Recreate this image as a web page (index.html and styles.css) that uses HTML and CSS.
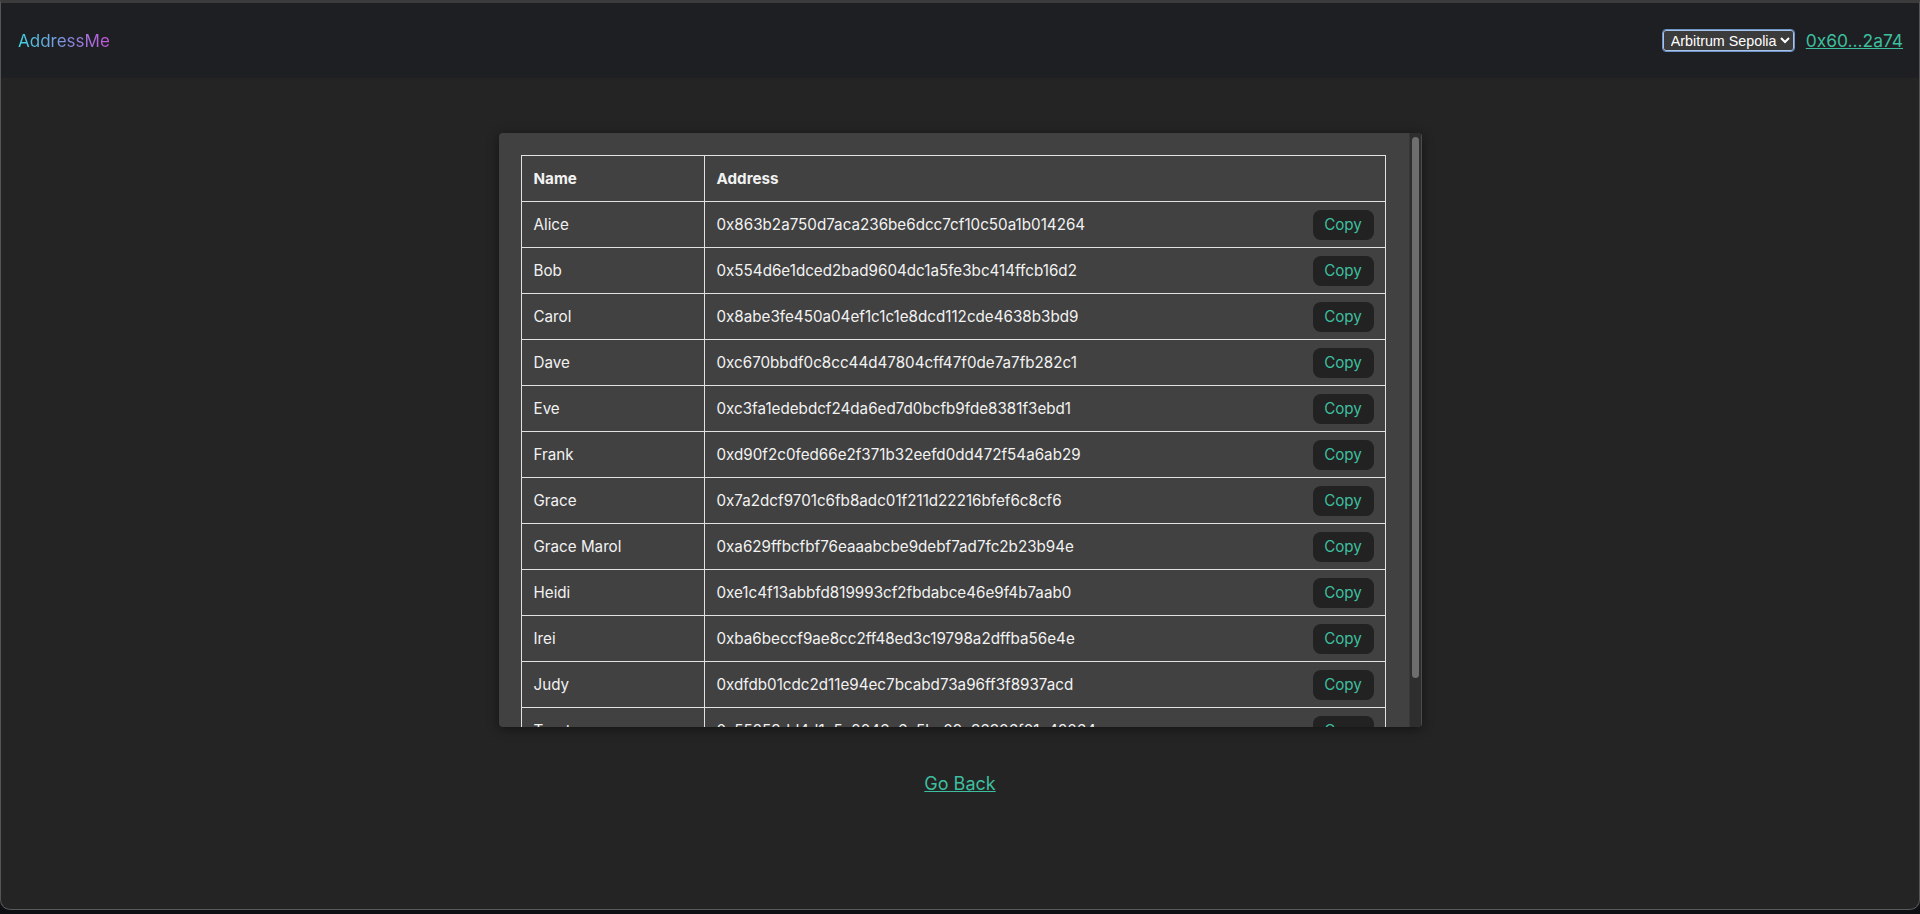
FILE: index.html
```html
<!DOCTYPE html>
<html lang="en">
<head>
<meta charset="utf-8">
<title>AddressMe</title>
<link rel="stylesheet" href="styles.css">
</head>
<body>
<div class="window">
  <header class="header">
    <div class="logo">AddressMe</div>
    <div class="header-right">
      <select class="network">
        <option>Arbitrum Sepolia</option>
        <option>Arbitrum One</option>
        <option>Ethereum</option>
      </select>
      <a class="account" href="#">0x60...2a74</a>
    </div>
  </header>
  <main class="main">
    <div class="card">
      <div class="scroller">
        <table class="book">
          <thead>
            <tr><th class="col-name">Name</th><th>Address</th></tr>
          </thead>
          <tbody>
            <tr><td>Alice</td><td><div class="addr"><span>0x863b2a750d7aca236be6dcc7cf10c50a1b014264</span><button class="copy">Copy</button></div></td></tr>
            <tr><td>Bob</td><td><div class="addr"><span>0x554d6e1dced2bad9604dc1a5fe3bc414ffcb16d2</span><button class="copy">Copy</button></div></td></tr>
            <tr><td>Carol</td><td><div class="addr"><span>0x8abe3fe450a04ef1c1c1e8dcd112cde4638b3bd9</span><button class="copy">Copy</button></div></td></tr>
            <tr><td>Dave</td><td><div class="addr"><span>0xc670bbdf0c8cc44d47804cff47f0de7a7fb282c1</span><button class="copy">Copy</button></div></td></tr>
            <tr><td>Eve</td><td><div class="addr"><span>0xc3fa1edebdcf24da6ed7d0bcfb9fde8381f3ebd1</span><button class="copy">Copy</button></div></td></tr>
            <tr><td>Frank</td><td><div class="addr"><span>0xd90f2c0fed66e2f371b32eefd0dd472f54a6ab29</span><button class="copy">Copy</button></div></td></tr>
            <tr><td>Grace</td><td><div class="addr"><span>0x7a2dcf9701c6fb8adc01f211d22216bfef6c8cf6</span><button class="copy">Copy</button></div></td></tr>
            <tr><td>Grace Marol</td><td><div class="addr"><span>0xa629ffbcfbf76eaaabcbe9debf7ad7fc2b23b94e</span><button class="copy">Copy</button></div></td></tr>
            <tr><td>Heidi</td><td><div class="addr"><span>0xe1c4f13abbfd819993cf2fbdabce46e9f4b7aab0</span><button class="copy">Copy</button></div></td></tr>
            <tr><td>Irei</td><td><div class="addr"><span>0xba6beccf9ae8cc2ff48ed3c19798a2dffba56e4e</span><button class="copy">Copy</button></div></td></tr>
            <tr><td>Judy</td><td><div class="addr"><span>0xdfdb01cdc2d11e94ec7bcabd73a96ff3f8937acd</span><button class="copy">Copy</button></div></td></tr>
            <tr><td>Trent</td><td><div class="addr"><span>0x55253dd4d1e5c2046c6a5bc09c36306f01c42064</span><button class="copy">Copy</button></div></td></tr>
          </tbody>
        </table>
      </div>
      <div class="scrollbar"><div class="thumb"></div></div>
    </div>
    <a class="back" href="#">Go Back</a>
  </main>
</div>
</body>
</html>
```
FILE: styles.css
```css
html, body {
  margin: 0;
  padding: 0;
  background: #0d0f12;
  font-family: Inter, "Noto Sans", "Liberation Sans", sans-serif;
}

.window {
  box-sizing: border-box;
  height: 910px;
  display: flex;
  flex-direction: column;
  background: #242424;
  border-top: 3px solid #3b3b3b;
  border-left: 1px solid #555555;
  border-right: 1px solid #555555;
  border-bottom: 1px solid #5a5a5a;
  border-radius: 0 0 10px 10px;
  overflow: hidden;
}

.header {
  height: 75px;
  flex: none;
  background: #1e1f22;
  display: flex;
  align-items: center;
  justify-content: space-between;
  padding: 0 16px 0 17px;
}

.logo {
  font-size: 17px;
  background: linear-gradient(90deg, #40d4e0 0%, #7f92e2 50%, #c652d8 100%);
  -webkit-background-clip: text;
  background-clip: text;
  color: transparent;
}

.header-right {
  display: flex;
  align-items: center;
  gap: 12px;
}

.network {
  color-scheme: dark;
  font-family: "Liberation Sans", Arial, sans-serif;
  font-size: 14.3px;
  color: #ffffff;
  background: #3b3b3b;
  border: 1px solid #a9c4e8;
  border-radius: 3px;
  height: 21px;
  padding: 0 0 0 3px;
  outline: 1px solid #6f94c8;
}

.account {
  font-size: 17.4px;
  color: #3dbf9f;
  text-decoration: underline;
}

.main {
  display: flex;
  flex-direction: column;
  align-items: center;
  padding-top: 55px;
}

.card {
  width: 923px;
  height: 594px;
  display: flex;
  background: #414141;
  border-radius: 4px;
  box-shadow: 0 2px 12px rgba(0, 0, 0, 0.45);
  overflow: hidden;
}

.scroller {
  flex: 1;
  min-width: 0;
  overflow: hidden;
  padding: 22px 23px 22px 22px;
}

.scrollbar {
  box-sizing: border-box;
  flex: none;
  width: 13px;
  background: #2e2e2e;
  border-left: 1px solid #383838;
  border-right: 1px solid #4c4c4c;
  padding: 4px 2px;
}

.thumb {
  height: 541px;
  background: #6e6e6e;
  border-radius: 4px;
}

.book {
  width: 100%;
  border-collapse: collapse;
  color: #f2f2f2;
  font-size: 15.2px;
}

.book th,
.book td {
  border: 1px solid #e2e2e2;
  height: 45px;
  padding: 0 11px 0 12px;
  text-align: left;
}

.book th {
  font-weight: 700;
}

.col-name {
  width: 159px;
}

.addr {
  display: flex;
  align-items: center;
  justify-content: space-between;
}

.copy {
  font-family: inherit;
  font-size: 15.2px;
  color: #3dbf9f;
  background: #222222;
  border: none;
  border-radius: 8px;
  width: 61px;
  height: 30px;
  padding: 0;
  cursor: pointer;
}

.back {
  margin-top: 46px;
  font-size: 18px;
  color: #3dbf9f;
  text-decoration: underline;
}
```
